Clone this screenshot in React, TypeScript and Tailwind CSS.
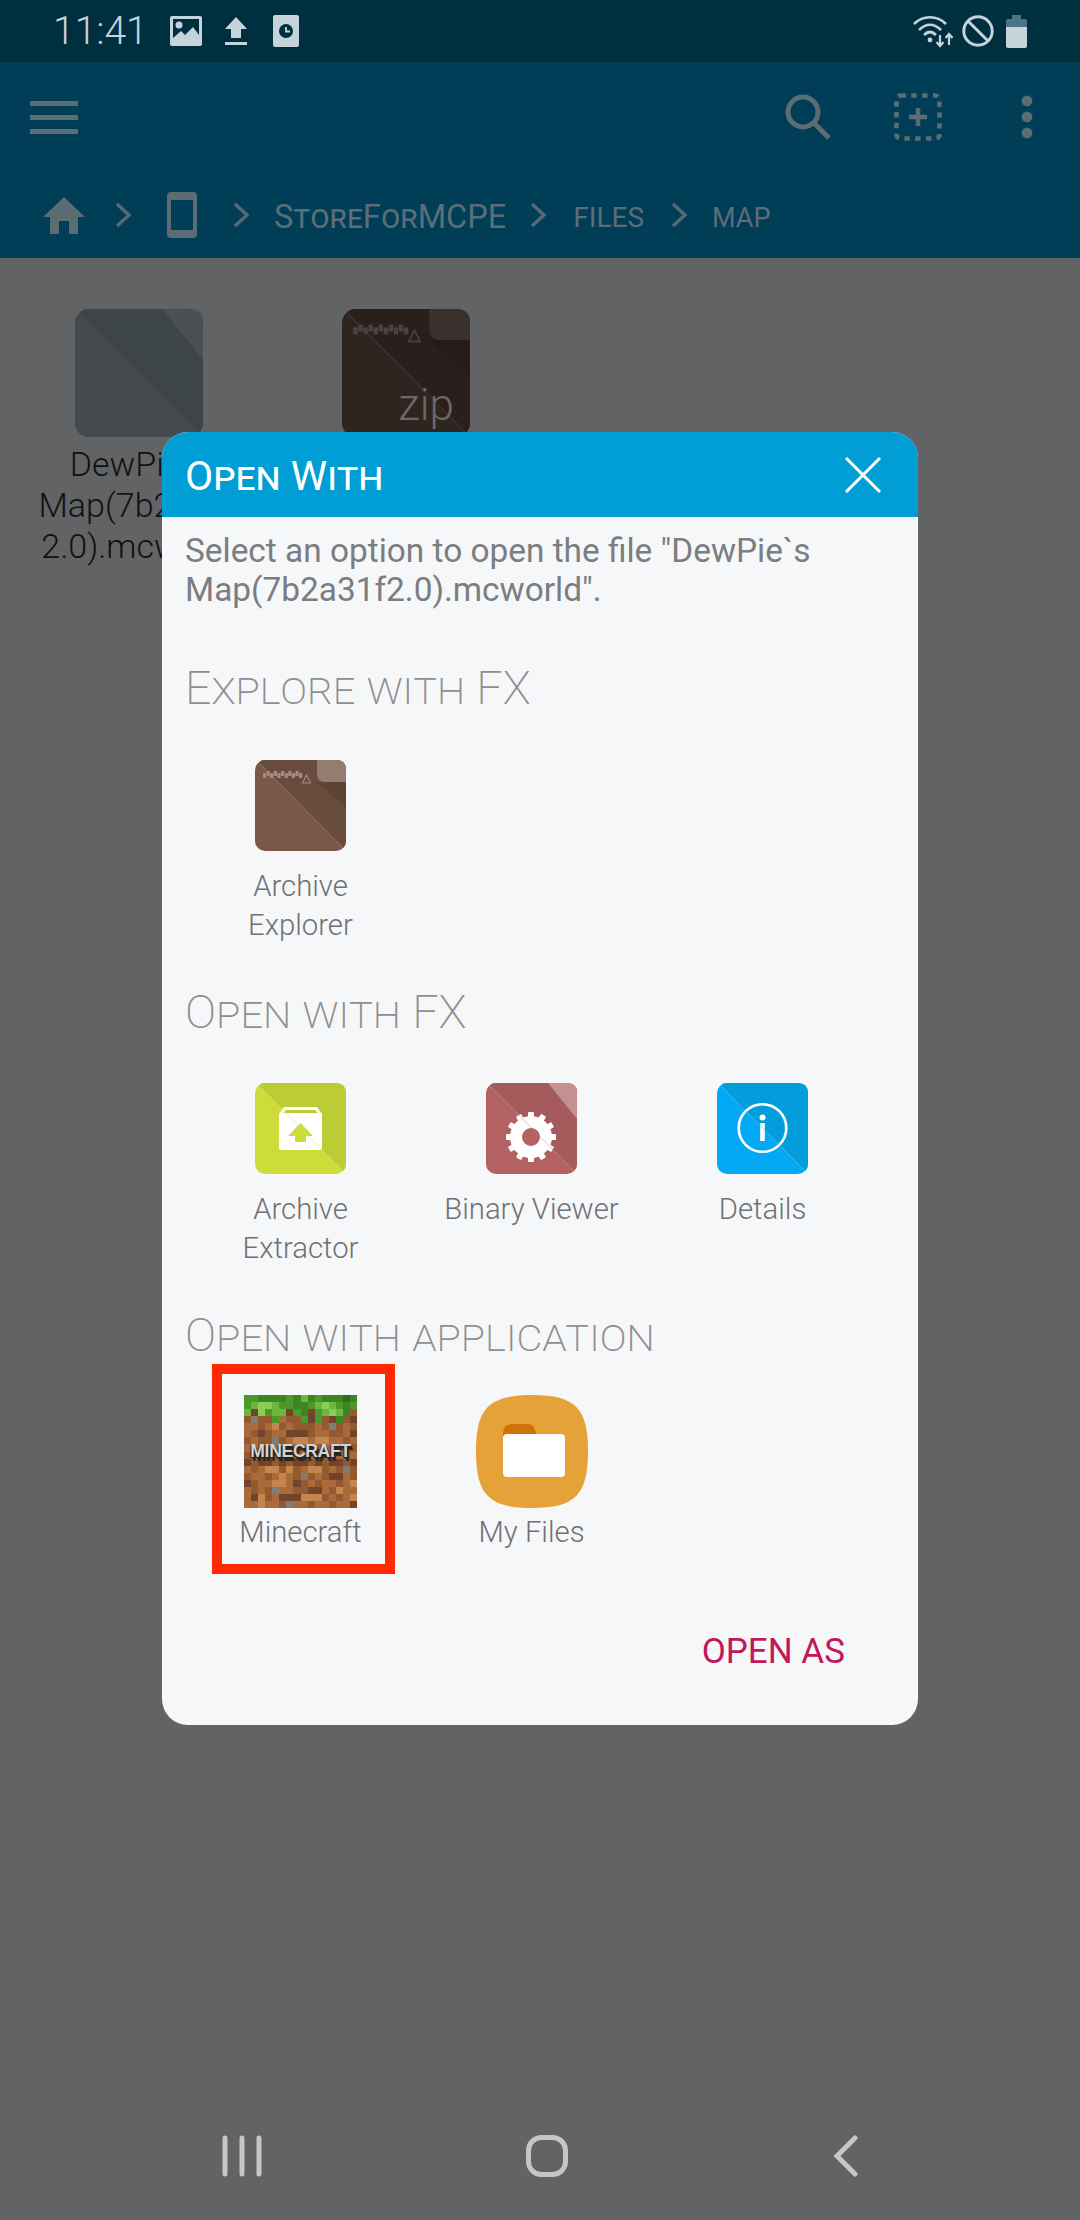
const DIRT_GRID = [
  "aabbbbabcbabbbeb",
  "acddcaabbacdcaba",
  "cndaccnabnacdcbm",
  "msmmaommanamnbmn",
  "oomopmommmomsmom",
  "omnmoonnnmoommon",
  "mommsmoppoppoomo",
  "oomoomomoomoomom",
  "momommomoomomomo",
  "nmnnmnmnnmnmnnmn",
  "omoppmpmoppmomsm",
  "moomopomsmomnnom",
  "nmoopponmomoomop",
  "omomsoommnnompoo",
  "onpmonnnpppmomop",
  "oopoomsoomoomoon",
];

const DIRT_COLORS: Record<string, string> = {
  a: "#4a9a2a",
  b: "#3c8522",
  c: "#6cb83e",
  d: "#8ccc58",
  e: "#2f6e20",
  n: "#70452a",
  m: "#95592f",
  o: "#a96a3c",
  p: "#c4864c",
  s: "#7f7d78",
};

function Zipper({ color }: { color: string }) {
  const teeth = [0, 1, 2, 3, 4, 5, 6, 7, 8, 9, 10];
  return (
    <g fill={color}>
      {teeth.map((t) => (
        <rect key={t} x={8 + t * 3.6} y={t % 2 === 0 ? 13 : 11} width="3.2" height="5" />
      ))}
      <path d="M51.5 15 L55.5 23 H47.5 Z" fill="none" stroke={color} strokeWidth="1.1" />
    </g>
  );
}

function FileIcon({
  base,
  dark,
  shade,
  corner,
  line,
  size,
  tab = false,
  zipper,
  children,
}: {
  base: string;
  dark: string;
  shade?: string;
  corner?: string;
  line?: string;
  size: number;
  tab?: boolean;
  zipper?: string;
  children?: React.ReactNode;
}) {
  return (
    <svg width={size} height={size} viewBox="0 0 91 91" className="block">
      <rect width="91" height="91" rx="10" fill={base} />
      <path d="M4 3 Q5 0 10 0 H81 Q91 0 91 10 V81 Q91 85 88 88 Z" fill={dark} />
      {shade && <path d="M62 22 L91 48 V22 Z" fill={shade} />}
      {corner && !tab && <path d="M62 0 H81 Q91 0 91 10 V36 Z" fill={corner} />}
      {corner && tab && <path d="M62 0 H81 Q91 0 91 10 V22 H70 Q62 22 62 14 Z" fill={corner} />}
      {zipper && <Zipper color={zipper} />}
      {children}
      {line && <path d="M4 3 L88 88" stroke={line} strokeWidth="0.6" />}
    </svg>
  );
}

function MinecraftIcon() {
  return (
    <div className="relative w-[113px] h-[113px]">
      <svg width="113" height="113" viewBox="0 0 16 16" shapeRendering="crispEdges" className="block">
        {DIRT_GRID.map((row, y) =>
          row.split("").map((c, x) => <rect key={`${x}-${y}`} x={x} y={y} width="1" height="1" fill={DIRT_COLORS[c]} />)
        )}
      </svg>
      <div className="absolute left-[3px] top-[44px] w-[107px] text-center font-['Liberation_Sans',sans-serif] font-bold text-[17.5px] leading-[24px] tracking-[-0.3px] text-[#d4d4d2] [text-shadow:1px_2px_0_#26221f,2px_4px_1px_#26221f,-1px_1px_0_#26221f]">
        MINECRAFT
      </div>
    </div>
  );
}

function Tile({ icon, label }: { icon: React.ReactNode; label: string[] }) {
  return (
    <div className="flex flex-col items-center">
      <div className="h-[91px] flex items-center justify-center">{icon}</div>
      <div className="mt-[16px] text-center text-[29.3px] leading-[39px] font-light text-[#6f7174] whitespace-nowrap">
        {label.map((l) => (
          <div key={l}>{l}</div>
        ))}
      </div>
    </div>
  );
}

function SectionTitle({ children }: { children: string }) {
  return <h3 className="h-[60px] leading-[60px] text-[46.4px] font-extralight text-[#8e8f91] [font-variant:small-caps] whitespace-nowrap">{children}</h3>;
}

function Chevron({ className }: { className: string }) {
  return (
    <svg width="16" height="26" viewBox="0 0 16 26" className={className} fill="none" stroke="#566a74" strokeWidth="3.4">
      <path d="M2 2 L14 13 L2 24" />
    </svg>
  );
}

function StatusBar() {
  return (
    <div className="h-[62px] bg-[#002f40] flex items-center">
      <span className="ml-[53px] text-[39px] leading-[62px] font-light text-[#c5d3db]">11:41</span>
      <svg width="32" height="30" viewBox="0 0 32 30" className="ml-[22px]">
        <rect width="32" height="30" rx="2" fill="#c5d3db" />
        <path d="M3 3 H29 V19 L23 11 L15 19 L11 15 L3 22 Z M9 5.5 A3.5 3.5 0 1 0 9 12.5 A3.5 3.5 0 1 0 9 5.5 Z" fill="#002f40" fillRule="evenodd" />
      </svg>
      <svg width="22" height="28" viewBox="0 0 22 28" className="ml-[23px]">
        <path d="M11 0 L22 12 H16 V21 H6 V12 H0 Z M0 25 H22 V28 H0 Z" fill="#c5d3db" />
      </svg>
      <svg width="26" height="32" viewBox="0 0 26 32" className="ml-[26px]">
        <rect width="26" height="32" rx="2" fill="#c5d3db" />
        <circle cx="13" cy="16" r="7" fill="#002f40" />
        <path d="M13 12 V16.5 H17" stroke="#c5d3db" strokeWidth="1.8" fill="none" />
      </svg>
      <svg width="42" height="34" viewBox="0 0 42 34" className="ml-auto" fill="none" stroke="#c5d3db" strokeWidth="2.6">
        <path d="M1 10 C10 1 24 1 33 10" />
        <path d="M6 16 C13 9 21 9 28 16" />
        <path d="M11 21 C15 17 19 17 23 21" />
        <circle cx="17" cy="26" r="2.4" fill="#c5d3db" stroke="none" />
        <path d="M27 21 V31 M23.5 28 L27 32 L30.5 28 M36 31 V20 M32.5 24 L36 20 L39.5 24" strokeWidth="2.2" />
      </svg>
      <svg width="32" height="32" viewBox="0 0 32 32" className="ml-[7px]" fill="none" stroke="#c5d3db" strokeWidth="3">
        <circle cx="16" cy="16" r="14.2" />
        <path d="M6 6 L26 26" />
      </svg>
      <svg width="21" height="33" viewBox="0 0 21 33" className="ml-[12px] mr-[53px]">
        <path d="M6 0 H15 V4 H19 Q21 4 21 6 V12 H0 V6 Q0 4 2 4 H6 Z" fill="#4d7186" />
        <path d="M0 12 H21 V31 Q21 33 19 33 H2 Q0 33 0 31 Z" fill="#c5d3db" />
      </svg>
    </div>
  );
}

function ToolBar() {
  return (
    <div className="h-[196px] bg-[#003d57] flex flex-col">
      <div className="h-[110px] flex items-center">
        <div className="ml-[30px] w-[48px] flex flex-col gap-[9px]">
          <div className="h-[5px] bg-[#5b6c73]" />
          <div className="h-[5px] bg-[#5b6c73]" />
          <div className="h-[5px] bg-[#5b6c73]" />
        </div>
        <svg width="46" height="46" viewBox="0 0 46 46" className="ml-auto" fill="none" stroke="#5b6c73" strokeWidth="5">
          <circle cx="18" cy="18" r="15" />
          <path d="M28 28 L44 44" />
        </svg>
        <svg width="48" height="48" viewBox="0 0 48 48" className="ml-[63px]" fill="none" stroke="#5b6c73" strokeWidth="4.6">
          <rect x="2.5" y="2.5" width="43" height="43" rx="4" strokeDasharray="5.4 5.4" />
          <path d="M24 15 V33 M15 24 H33" />
        </svg>
        <svg width="12" height="44" viewBox="0 0 12 44" className="ml-[79px] mr-[47px]" fill="#5b6c73">
          <circle cx="6" cy="6" r="5.4" />
          <circle cx="6" cy="22" r="5.4" />
          <circle cx="6" cy="38" r="5.4" />
        </svg>
      </div>
      <div className="h-[86px] flex items-center text-[#5b6d76] whitespace-nowrap">
        <svg width="42" height="37" viewBox="0 0 42 37" className="ml-[43px]" fill="#5b6c73">
          <path d="M21 0 L42 20 H35 V37 H26 V24 H16 V37 H7 V20 H0 Z" />
        </svg>
        <Chevron className="ml-[30px]" />
        <svg width="30" height="46" viewBox="0 0 30 46" className="ml-[36px]">
          <path d="M4 0 H26 Q30 0 30 4 V42 Q30 46 26 46 H4 Q0 46 0 42 V4 Q0 0 4 0 Z M4 8 V38 H26 V8 Z" fill="#5b6c73" fillRule="evenodd" />
        </svg>
        <Chevron className="ml-[36px]" />
        <span className="ml-[25px] mt-[4px] text-[32.6px] leading-[40px] [font-variant:small-caps]">StoreForMCPE</span>
        <Chevron className="ml-[24px]" />
        <span className="ml-[27px] mt-[5px] text-[28px] leading-[40px]">FILES</span>
        <Chevron className="ml-[27px]" />
        <span className="ml-[25px] mt-[5px] text-[27px] leading-[40px]">MAP</span>
      </div>
    </div>
  );
}

function FileGrid() {
  return (
    <div className="flex pt-[51px] text-[#101113]">
      <div className="w-[200px] ml-[39px] flex flex-col items-center">
        <FileIcon base="#43494c" dark="#3e4548" corner="#4a5053" size={128} />
        <div className="mt-[7px] text-center text-[34px] leading-[41px] font-light whitespace-nowrap">
          <div>DewPie`s</div>
          <div>Map(7b2a31f</div>
          <div>2.0).mcworld</div>
        </div>
      </div>
      <div className="relative ml-[103px] w-[128px] h-[128px]">
        <FileIcon base="#2e2420" dark="#2a1f1c" shade="#261b18" corner="#3a312e" tab line="#4b4340" zipper="#4b4340" size={128} />
        <span className="absolute right-[16px] bottom-[7px] text-[44px] leading-[50px] font-light text-[#6b6866]">zip</span>
      </div>
    </div>
  );
}

function OpenWithDialog() {
  return (
    <div className="absolute left-[162px] top-[432px] w-[756px] h-[1293px] rounded-[26px] overflow-hidden bg-[#f6f7f9] flex flex-col">
      <div className="h-[85px] bg-[#019dd5] flex items-center justify-between pl-[23px] pr-[37px]">
        <h2 className="pt-[2px] text-[41px] leading-[50px] text-white [font-variant:small-caps]">Open With</h2>
        <svg width="36" height="36" viewBox="0 0 36 36" fill="none" stroke="#ffffff" strokeWidth="3">
          <path d="M1 1 L35 35 M35 1 L1 35" />
        </svg>
      </div>
      <div className="px-[23px] flex flex-col">
        <p className="pt-[15px] text-[33.4px] leading-[38.5px] text-[#7c7d80] whitespace-nowrap">
          Select an option to open the file "DewPie`s
          <br />
          Map(7b2a31f2.0).mcworld".
        </p>
        <div className="mt-[49px]">
          <SectionTitle>Explore with FX</SectionTitle>
        </div>
        <div className="grid grid-cols-3 w-[693px] pt-[42px]">
          <Tile
            label={["Archive", "Explorer"]}
            icon={<FileIcon base="#7a5748" dark="#684c3d" shade="#5e4434" corner="#957c71" tab line="#a38b80" zipper="#a38b80" size={91} />}
          />
        </div>
        <div className="mt-[37px]">
          <SectionTitle>Open with FX</SectionTitle>
        </div>
        <div className="grid grid-cols-3 w-[693px] pt-[41px]">
          <Tile
            label={["Archive", "Extractor"]}
            icon={
              <FileIcon base="#cddc39" dark="#bccc35" line="#dde57e" size={91}>
                <path d="M29 24 H62 L67 31 V65 Q67 67 65 67 H26 Q24 67 24 65 V31 Z M28 30 L31 27 H60 L63 30 Z" fill="#ffffff" fillRule="evenodd" />
                <path d="M45.5 40 L58 53 H51 V59 H40 V53 H33 Z" fill="#cddc39" />
              </FileIcon>
            }
          />
          <Tile
            label={["Binary Viewer"]}
            icon={
              <FileIcon base="#b36161" dark="#a55b5b" corner="#c49090" line="#cc9a9a" size={91}>
                <g fill="#ffffff">
                  <path fillRule="evenodd" d="M45 33 A21 21 0 1 0 45 75 A21 21 0 1 0 45 33 Z M45 45 A9 9 0 1 1 45 63 A9 9 0 1 1 45 45 Z" />
                  {[0, 30, 60, 90, 120, 150, 180, 210, 240, 270, 300, 330].map((r) => (
                    <rect key={r} x="42" y="29" width="6" height="7" rx="1" transform={`rotate(${r} 45 54)`} />
                  ))}
                </g>
              </FileIcon>
            }
          />
          <Tile
            label={["Details"]}
            icon={
              <FileIcon base="#03a9f4" dark="#049ddc" line="#5ac8f6" size={91}>
                <circle cx="45.5" cy="45" r="23.8" fill="none" stroke="#ffffff" strokeWidth="2.6" />
                <circle cx="45.5" cy="34.5" r="3" fill="#ffffff" />
                <rect x="43.2" y="40" width="4.6" height="18" fill="#ffffff" />
              </FileIcon>
            }
          />
        </div>
        <div className="mt-[37px]">
          <SectionTitle>Open with application</SectionTitle>
        </div>
        <div className="grid grid-cols-3 w-[693px] pt-[30px]">
          <div className="relative flex flex-col items-center">
            <MinecraftIcon />
            <div className="mt-[5px] text-center text-[29.3px] leading-[39px] font-light text-[#6f7174]">Minecraft</div>
            <div className="absolute left-[27px] top-[-31px] w-[183px] h-[210px] border-[10px] border-[#ff2a00]" />
          </div>
          <div className="flex flex-col items-center">
            <svg width="112" height="113" viewBox="0 0 112 113" className="block">
              <path d="M56 0 C100 0 112 14 112 56 C112 99 100 113 56 113 C12 113 0 99 0 56 C0 14 12 0 56 0 Z" fill="#e4a238" />
              <path d="M27 40 Q27 29 36 29 H52 Q58 29 60 38 V50 H27 Z" fill="#cf7209" />
              <path d="M27 43 Q27 39 31 39 H85 Q89 39 89 43 V78 Q89 82 85 82 H31 Q27 82 27 78 Z" fill="#ffffff" />
            </svg>
            <div className="mt-[5px] text-center text-[29.3px] leading-[39px] font-light text-[#6f7174]">My Files</div>
          </div>
        </div>
        <div className="mt-[80px] pr-[50px] text-right text-[35px] leading-[40px] text-[#c2185b]">OPEN AS</div>
      </div>
    </div>
  );
}

function NavBar() {
  return (
    <div className="mt-auto h-[130px] flex items-start pt-[45px] pr-[222px] pl-[222px] justify-between">
      <svg width="40" height="42" viewBox="0 0 40 42" stroke="#c5c6c7" strokeWidth="5" strokeLinecap="round">
        <path d="M3 3 V39 M20 3 V39 M37 3 V39" />
      </svg>
      <svg width="42" height="42" viewBox="0 0 42 42" fill="none" stroke="#c5c6c7" strokeWidth="5" className="-ml-[2px]">
        <rect x="2.5" y="2.5" width="37" height="37" rx="13" />
      </svg>
      <svg width="24" height="42" viewBox="0 0 24 42" fill="none" stroke="#c5c6c7" strokeWidth="5" strokeLinecap="round">
        <path d="M21 3 L3 21 L21 39" />
      </svg>
    </div>
  );
}

export default function App() {
  return (
    <div className="relative w-[1080px] h-[2220px] overflow-hidden bg-[#626365] flex flex-col font-['Roboto',sans-serif]">
      <StatusBar />
      <ToolBar />
      <FileGrid />
      <NavBar />
      <OpenWithDialog />
    </div>
  );
}
